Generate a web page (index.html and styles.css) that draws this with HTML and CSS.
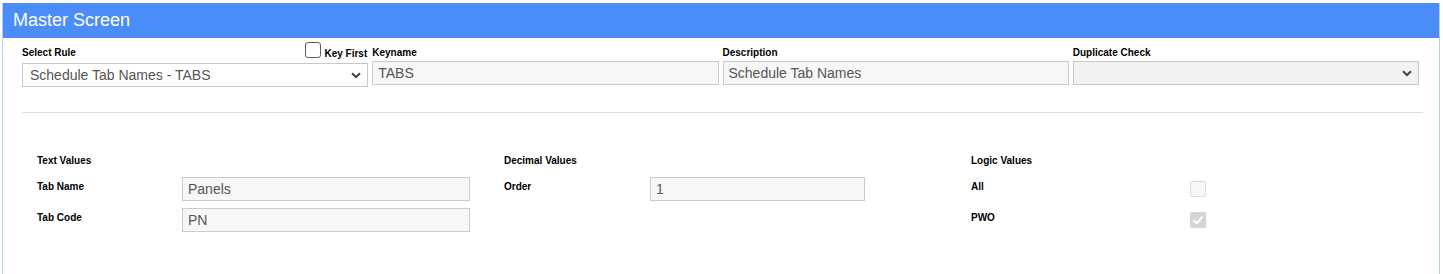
FILE: index.html
```html
<!DOCTYPE html>
<html lang="en">
<head>
<meta charset="utf-8">
<title>Master Screen</title>
<link rel="stylesheet" href="styles.css">
</head>
<body>
<div class="panel">
  <div class="panel-head">Master Screen</div>
  <div class="top-grid">
    <div class="field">
      <div class="field-head head-tall">
        <label class="lbl">Select Rule</label>
        <label class="key-first"><input type="checkbox" class="cb-native"><span>Key First</span></label>
      </div>
      <div class="select-wrap">
        <select class="sel sel-white"><option>Schedule Tab Names - TABS</option></select>
        <svg class="chev" width="10" height="7" viewBox="0 0 10 7"><path d="M1 1.2 L5 5 L9 1.2" fill="none" stroke="#444" stroke-width="2"/></svg>
      </div>
    </div>
    <div class="field">
      <div class="field-head"><label class="lbl">Keyname</label></div>
      <input class="txt" type="text" value="TABS" readonly>
    </div>
    <div class="field">
      <div class="field-head"><label class="lbl">Description</label></div>
      <input class="txt" type="text" value="Schedule Tab Names" readonly>
    </div>
    <div class="field">
      <div class="field-head"><label class="lbl">Duplicate Check</label></div>
      <div class="select-wrap">
        <select class="sel sel-grey" disabled><option></option></select>
        <svg class="chev" width="10" height="7" viewBox="0 0 10 7"><path d="M1 1.2 L5 5 L9 1.2" fill="none" stroke="#444" stroke-width="2"/></svg>
      </div>
    </div>
  </div>
  <hr class="sep">
  <div class="values">
    <div class="vcol">
      <div class="vhead">Text Values</div>
      <div class="vrow vrow-text">
        <span class="vlbl">Tab Name</span>
        <input class="txt" type="text" value="Panels" readonly>
      </div>
      <div class="vrow vrow-text">
        <span class="vlbl">Tab Code</span>
        <input class="txt" type="text" value="PN" readonly>
      </div>
    </div>
    <div class="vcol">
      <div class="vhead">Decimal Values</div>
      <div class="vrow vrow-dec">
        <span class="vlbl">Order</span>
        <input class="txt" type="text" value="1" readonly>
      </div>
    </div>
    <div class="vcol">
      <div class="vhead">Logic Values</div>
      <div class="vrow vrow-logic">
        <span class="vlbl">All</span>
        <span class="cb-dis"></span>
      </div>
      <div class="vrow vrow-logic">
        <span class="vlbl">PWO</span>
        <span class="cb-dis cb-checked"><svg width="16" height="16" viewBox="0 0 16 16"><path d="M3.5 8.3 L6.6 11.2 L12.4 4.8" fill="none" stroke="#fff" stroke-width="2.2"/></svg></span>
      </div>
    </div>
  </div>
</div>
</body>
</html>
```
FILE: styles.css
```css
html, body {
  height: 100%;
}
body {
  margin: 0;
  background: #fff;
  font-family: "Liberation Sans", Arial, sans-serif;
  color: #000;
}
.panel {
  box-sizing: border-box;
  height: calc(100% - 3px);
  margin: 3px 3px 0 2px;
  border-left: 1px solid #b6cff6;
  border-right: 1px solid #b6cff6;
}
.panel-head {
  height: 35px;
  line-height: 35px;
  background: #4b8df8;
  color: #fff;
  font-size: 18px;
  padding-left: 10px;
}
.top-grid {
  display: grid;
  grid-template-columns: repeat(4, 1fr);
  column-gap: 4px;
  padding: 4px 20px 0 19px;
}
.field {
  display: flex;
  flex-direction: column;
}
.field-head {
  display: flex;
  align-items: flex-end;
  justify-content: space-between;
  height: 19px;
}
.head-tall {
  height: 21px;
}
.lbl {
  font-size: 10px;
  font-weight: bold;
  line-height: 12px;
  margin-bottom: 2px;
}
.head-tall .lbl {
  margin-bottom: 4px;
}
.key-first {
  display: flex;
  align-items: flex-start;
  align-self: flex-start;
  font-size: 10px;
  font-weight: bold;
  line-height: 12px;
  margin-right: 1px;
}
.key-first span {
  margin-top: 6px;
  margin-left: 3px;
}
.cb-native {
  appearance: none;
  -webkit-appearance: none;
  width: 16px;
  height: 16px;
  margin: 0;
  border: 1px solid #5e5e5e;
  border-radius: 3px;
  background: #fff;
}
.select-wrap {
  position: relative;
}
.sel {
  appearance: none;
  -webkit-appearance: none;
  box-sizing: border-box;
  width: 100%;
  height: 24px;
  margin: 0;
  border: 1px solid #c8c8c8;
  border-radius: 0;
  padding: 0 20px 0 7px;
  font-family: "Liberation Sans", Arial, sans-serif;
  font-size: 14px;
  color: #555;
}
.sel-white {
  background: #fff;
}
.sel-grey {
  background: #f2f2f2;
  opacity: 1;
}
.chev {
  position: absolute;
  right: 7px;
  top: 9px;
  pointer-events: none;
}
.txt {
  box-sizing: border-box;
  width: 100%;
  height: 24px;
  margin: 0;
  border: 1px solid #cbcbcb;
  border-radius: 0;
  background: #f7f7f7;
  padding: 0 5px;
  font-family: "Liberation Sans", Arial, sans-serif;
  font-size: 14px;
  color: #555;
  outline: none;
}
.sep {
  border: 0;
  border-top: 1px solid #dddddd;
  margin: 25px 16px 0 19px;
  height: 0;
}
.values {
  display: grid;
  grid-template-columns: 467px 467px 467px;
  padding-left: 34px;
  padding-top: 42px;
}
.vhead {
  font-size: 10px;
  font-weight: bold;
  line-height: 12px;
  margin-bottom: 10px;
}
.vrow {
  display: grid;
  align-items: start;
  height: 24px;
  margin-bottom: 7px;
}
.vrow-text {
  grid-template-columns: 145px 288px;
}
.vrow-dec {
  grid-template-columns: 146px 215px;
}
.vrow-logic {
  grid-template-columns: 219px 16px;
  align-items: center;
}
.vlbl {
  font-size: 10px;
  font-weight: bold;
  line-height: 12px;
  padding-top: 4px;
}
.vrow-logic .vlbl {
  align-self: start;
}
.cb-dis {
  box-sizing: border-box;
  display: block;
  width: 16px;
  height: 16px;
  border: 1px solid #dcdcdc;
  border-radius: 2px;
  background: #f7f7f7;
}
.cb-checked {
  border: none;
  background: #d4d4d4;
}
.cb-checked svg {
  display: block;
}
```
